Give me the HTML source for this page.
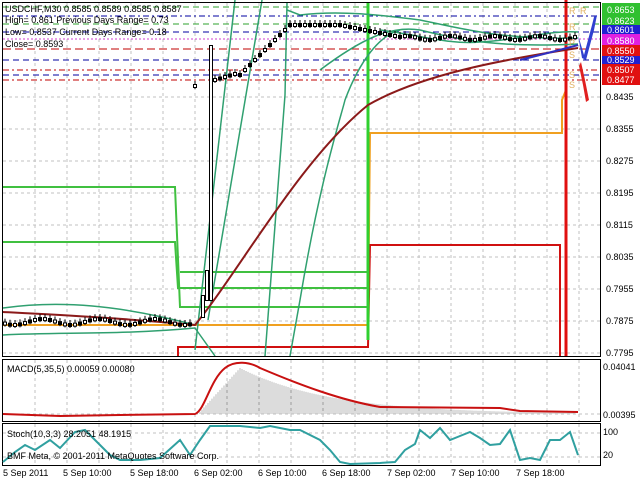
<!DOCTYPE html>
<html><head><meta charset="utf-8"><style>
html,body{margin:0;padding:0;background:#fff;width:640px;height:480px;overflow:hidden}
svg{display:block}
text{font-family:"Liberation Sans",sans-serif;font-size:9px;fill:#000}
</style></head><body>
<svg id="s" width="640" height="480" viewBox="0 0 640 480" xmlns="http://www.w3.org/2000/svg">
<rect width="640" height="480" fill="#fff"/>
<g id="grid" stroke="#c0c0c0" stroke-width="1" stroke-dasharray="3,3" fill="none"></g>
<g fill="none" stroke-width="1">
<line x1="3" y1="7" x2="600" y2="7" stroke="#2ca02c" stroke-dasharray="6,4"/>
<line x1="3" y1="16" x2="600" y2="16" stroke="#0000a0" stroke-dasharray="6,3,2,3"/>
<line x1="3" y1="24" x2="600" y2="24" stroke="#2ca02c" stroke-dasharray="6,4"/>
<line x1="3" y1="32" x2="600" y2="32" stroke="#0000a0" stroke-dasharray="6,4"/>
<line x1="3" y1="39" x2="600" y2="39" stroke="#d040d0" stroke-dasharray="2,2"/>
<line x1="3" y1="49" x2="600" y2="49" stroke="#c00000" stroke-dasharray="8,4"/>
<line x1="3" y1="60" x2="600" y2="60" stroke="#0000a0" stroke-dasharray="6,4"/>
<line x1="3" y1="70" x2="600" y2="70" stroke="#c00000" stroke-dasharray="6,3,2,3"/>
<line x1="3" y1="75" x2="600" y2="75" stroke="#0000a0" stroke-dasharray="6,4"/>
<line x1="3" y1="80" x2="600" y2="80" stroke="#c00000" stroke-dasharray="6,3,2,3"/>
</g>
<g fill="none" stroke-width="2">
<polyline points="3,187 175,187 180,307 368,307" stroke="#40c040"/>
<polyline points="3,242 175,242 178,288 368,288" stroke="#40c040"/>
<polyline points="180,272 368,272" stroke="#40c040"/>
<polyline points="3,325 195,325 368,325 370,133 562,133 562,100 566,90 566,0" stroke="#f0a020"/>
<polyline points="178,356 178,347 368,347 370,245 560,245 560,356" stroke="#d01010"/>
<line x1="368" y1="2" x2="368" y2="340" stroke="#30d030" stroke-width="3"/>
<line x1="566" y1="0" x2="566" y2="356" stroke="#e01010" stroke-width="3"/>
</g>
<g fill="none" stroke="#30a070" stroke-width="1.5">
<path d="M3,308 C60,300 120,305 195,325"/>
<path d="M3,335 C60,332 120,335 195,328 L215,356"/>
<path d="M195,350 L235,0"/>
<path d="M208,320 L262,0"/>
<path d="M265,356 L285,95 L287,3"/>
<path d="M290,356 L300,300 C320,180 340,120 345,100 C360,60 380,35 400,30"/>
<path d="M287,10 L300,15 C340,10 380,15 420,20 C460,28 500,40 578,38"/>
<path d="M320,70 C360,40 390,25 420,30 C460,40 500,48 578,44"/>
<path d="M380,30 C420,35 450,45 480,42 C520,40 550,30 578,32"/>
</g>
<path d="M3,312 C60,315 120,318 195,325 C240,270 300,160 368,105 C420,75 500,60 578,48" fill="none" stroke="#8b1a1a" stroke-width="2"/>
<path d="M520,60 C540,55 560,50 578,45" fill="none" stroke="#3030c0" stroke-width="2"/>
<g id="cd" stroke="#000" stroke-width="1" fill="none"></g>
<rect x="209.5" y="45.5" width="3" height="255" fill="#fff" stroke="#000"/>
<rect x="205.5" y="270.5" width="3" height="30" fill="#fff" stroke="#000"/>
<rect x="201.5" y="295.5" width="3" height="22" fill="#fff" stroke="#000"/>
<path d="M578,35 L584,55 L592,25 L594,17 L597,15 L594,30 L586,60 L582,58 Z" fill="#3040d0"/>
<path d="M581,62 L585,80 L589,100 L586,102 L583,85 L579,66 Z" fill="#e02020"/>
<g font-size="9">
<text x="569" y="14" style="fill:#e0b060">R</text><text x="580" y="14" style="fill:#e0b060">R</text>
<text x="569" y="30" style="fill:#e0b060">R</text><text x="569" y="46" style="fill:#e0b060">P</text>
<text x="569" y="58" style="fill:#e0b060">S</text><text x="569" y="78" style="fill:#e0b060">S</text><text x="569" y="88" style="fill:#e0b060">S</text>
</g>
<g fill="none" stroke="#000" stroke-width="1">
<rect x="2.5" y="2.5" width="598" height="354"/>
<rect x="2.5" y="359.5" width="598" height="62"/>
<rect x="2.5" y="423.5" width="598" height="42"/>
</g>
<text x="5" y="12">USDCHF,M30  0.8585 0.8589 0.8585 0.8587</text>
<text x="5" y="23">High= 0.861   Previous Days Range= 0.73</text>
<text x="5" y="35">Low= 0.8537   Current Days Range= 0.18</text>
<text x="5" y="47">Close= 0.8593</text>
<g>
<rect x="602" y="3" width="38" height="12" fill="#30c030"/>
<rect x="602" y="15" width="38" height="10" fill="#30c030"/>
<rect x="602" y="25" width="38" height="9" fill="#2020d0"/>
<rect x="602" y="34" width="38" height="11" fill="#e020e0"/>
<rect x="602" y="45" width="38" height="11" fill="#e01010"/>
<rect x="602" y="56" width="38" height="8" fill="#2020d0"/>
<rect x="602" y="64" width="38" height="10" fill="#e01010"/>
<rect x="602" y="74" width="38" height="11" fill="#e01010"/>
</g>
<g font-size="9.5">
<text x="607" y="13" style="fill:#fff">0.8653</text>
<text x="607" y="24" style="fill:#fff">0.8623</text>
<text x="607" y="33" style="fill:#fff">0.8601</text>
<text x="607" y="44" style="fill:#fff">0.8580</text>
<text x="607" y="54" style="fill:#fff">0.8550</text>
<text x="607" y="63" style="fill:#fff">0.8529</text>
<text x="607" y="73" style="fill:#fff">0.8507</text>
<text x="607" y="83" style="fill:#fff">0.8477</text>
</g>
<g>
<text x="606" y="100">0.8435</text><text x="606" y="132">0.8355</text><text x="606" y="164">0.8275</text>
<text x="606" y="196">0.8195</text><text x="606" y="228">0.8115</text><text x="606" y="260">0.8035</text>
<text x="606" y="292">0.7955</text><text x="606" y="324">0.7875</text><text x="606" y="356">0.7795</text>
<text x="603" y="370">0.04041</text><text x="603" y="418">0.00395</text>
<text x="603" y="435">100</text><text x="603" y="458">20</text>
</g>
<g id="hist" stroke="#b8b8b8" stroke-width="1"></g>
<path d="M3,414 L60,416 L120,415 L195,414 C205,410 210,380 225,368 C235,360 250,362 260,368 C300,385 340,400 380,407 L500,408 L520,411 L578,412" fill="none" stroke="#c81010" stroke-width="2"/>
<text x="7" y="372">MACD(5,35,5) 0.00059 0.00080</text>
<polyline points="3,462 15,452 25,445 35,450 50,440 60,448 75,432 85,430 95,440 110,455 120,460 140,460 160,458 180,440 190,455 200,440 210,426 240,426 260,428 270,426 290,430 300,430 320,440 330,450 340,462 350,464 380,463 395,462 405,450 415,444 420,430 430,438 440,428 450,440 460,436 470,432 480,438 490,445 500,444 510,430 520,460 530,458 540,460 550,440 560,440 570,432 578,455" fill="none" stroke="#30a0a0" stroke-width="2"/>
<text x="7" y="437">Stoch(10,3,3) 28.2051 48.1915</text>
<text x="7" y="459">BMF Meta, © 2001-2011 MetaQuotes Software Corp.</text>
<g font-size="9">
<text x="3" y="476">5 Sep 2011</text><text x="63" y="476">5 Sep 10:00</text><text x="130" y="476">5 Sep 18:00</text>
<text x="194" y="476">6 Sep 02:00</text><text x="258" y="476">6 Sep 10:00</text><text x="322" y="476">6 Sep 18:00</text>
<text x="387" y="476">7 Sep 02:00</text><text x="451" y="476">7 Sep 10:00</text><text x="516" y="476">7 Sep 18:00</text>
</g>
</svg>
<script>
var NS="http://www.w3.org/2000/svg";
function el(p,t,a){var e=document.createElementNS(NS,t);for(var k in a)e.setAttribute(k,a[k]);p.appendChild(e);return e;}
var g=document.getElementById('grid');
for(var x=35;x<600;x+=32){el(g,'line',{x1:x,y1:3,x2:x,y2:356});el(g,'line',{x1:x,y1:360,x2:x,y2:421});el(g,'line',{x1:x,y1:424,x2:x,y2:465});}
for(var y=97;y<356;y+=32)el(g,'line',{x1:3,y1:y,x2:600,y2:y});
el(g,'line',{x1:3,y1:433,x2:600,y2:433});el(g,'line',{x1:3,y1:457,x2:600,y2:457});el(g,'line',{x1:3,y1:414,x2:600,y2:414});
var c=document.getElementById('cd');
function price(x){if(x<195)return 322+3*Math.sin(x/9);if(x<240)return 80-(x-215)*0.3;if(x<290)return 75-(x-240)*1.0;if(x<340)return 25;if(x<400)return 25+(x-340)*0.2;return 38-2*Math.sin(x/7);}
for(var x=5;x<578;x+=5){if(x>196&&x<214)continue;var p=price(x);var h=3;el(c,'line',{x1:x,y1:p-h-2,x2:x,y2:p+h});el(c,'rect',{x:x-1.5,y:p-1.5,width:3,height:3,fill:(x%10?'#fff':'#000')});}
var hg=document.getElementById('hist');
for(var x=198;x<575;x+=2){var t;if(x<240)t=(x-198)/42;else t=Math.exp(-(x-240)/90);var y=414-46*t;el(hg,'line',{x1:x,y1:414,x2:x,y2:y});}
</script>
</body></html>
